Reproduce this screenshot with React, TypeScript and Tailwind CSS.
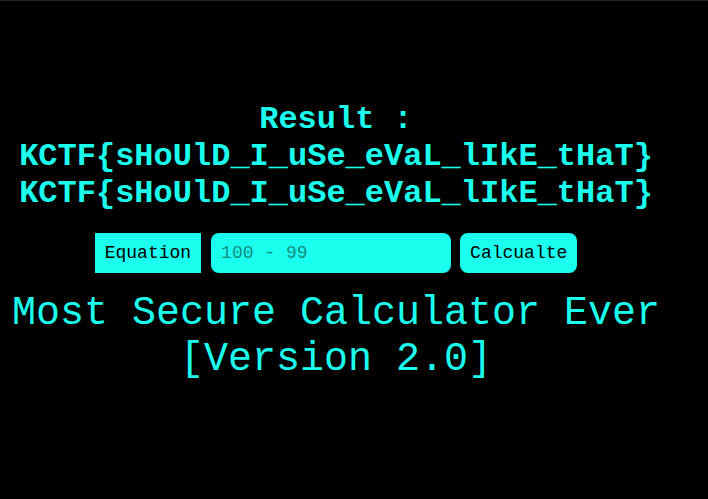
import React from "react";

export default function App() {
  const mono = { fontFamily: '"Liberation Mono", "DejaVu Sans Mono", monospace' };
  return (
    <div className="w-[708px] h-[499px] bg-black border-t border-[#222222] overflow-hidden" style={mono}>
      <div className="w-[672px] flex flex-col items-center pt-[100px]">
        <div className="flex flex-col items-center text-[32px] leading-[37px] font-bold text-[#1affee]">
          <div>Result :</div>
          <div>KCTF{"{"}sHoUlD_I_uSe_eVaL_lIkE_tHaT{"}"}</div>
          <div>KCTF{"{"}sHoUlD_I_uSe_eVaL_lIkE_tHaT{"}"}</div>
        </div>
        <div className="flex items-center mt-[21px] h-[40px] text-[18px] text-black">
          <div className="h-[40px] px-[10px] bg-[#1affee] flex items-center">Equation</div>
          <input
            className="ml-[10px] w-[240px] h-[40px] rounded-[8px] bg-[#1affee] px-[10px] text-[18px] text-black outline-none placeholder:text-[#128c84]"
            style={mono}
            placeholder="100 - 99"
          />
          <button
            className="ml-[9px] h-[40px] px-[10px] rounded-[8px] bg-[#1affee] text-[18px] text-black"
            style={mono}
          >
            Calcualte
          </button>
        </div>
        <div className="mt-[18px] flex flex-col items-center text-[40px] leading-[46px] text-[#1affee]">
          <div>Most Secure Calculator Ever</div>
          <div>[Version 2.0]</div>
        </div>
      </div>
    </div>
  );
}
